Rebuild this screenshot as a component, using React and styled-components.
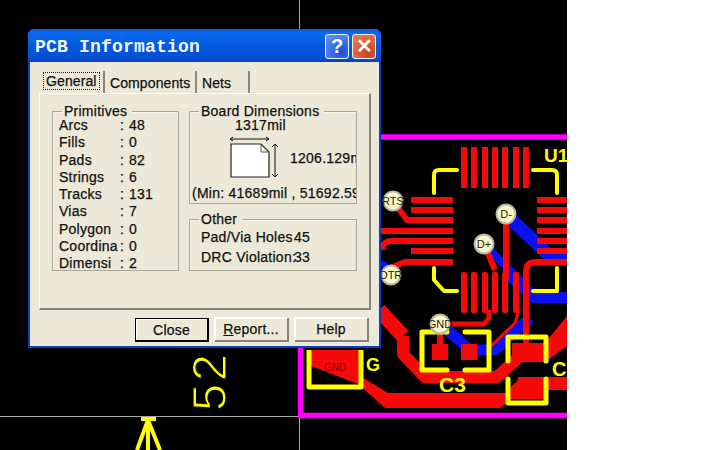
import React from "react";
import styled, { createGlobalStyle } from "styled-components";

const GlobalStyle = createGlobalStyle`
  html, body { margin: 0; padding: 0; background: #fff; }
  * { box-sizing: border-box; }
`;

const Desktop = styled.div`
  position: relative;
  width: 567px;
  height: 450px;
  background: #000;
  overflow: hidden;
`;

const Dialog = styled.div`
  position: absolute;
  left: 28px;
  top: 29px;
  width: 353px;
  height: 319px;
  display: flex;
  flex-direction: column;
  background: #ece9d8;
  border: 2px solid #0a3fc4;
  border-top: none;
  border-radius: 6px 6px 0 0;
  font-family: "Liberation Sans", Arial, sans-serif;
  font-size: 14px;
  color: #111;
`;

const TitleBar = styled.div`
  height: 33px;
  margin: 0 -2px;
  flex: none;
  display: flex;
  align-items: center;
  justify-content: space-between;
  padding: 3px 5px 0 7px;
  border-radius: 6px 6px 0 0;
  background: linear-gradient(180deg, #0a5be0 0%, #0a6af0 12%, #0458dc 55%, #0450d4 85%, #0a3fc0 100%);
`;

const Title = styled.div`
  font-family: "Liberation Mono", monospace;
  font-weight: 700;
  font-size: 18px;
  letter-spacing: 0.2px;
  color: #f2f6ff;
`;

const TitleButtons = styled.div`
  display: flex;
  gap: 3px;
  margin-top: -2px;
`;

const TitleButton = styled.div`
  width: 24px;
  height: 25px;
  display: flex;
  align-items: center;
  justify-content: center;
  border: 1px solid #f4f6ff;
  border-radius: 3px;
  font-family: "Liberation Sans", sans-serif;
  font-weight: 700;
  font-size: 20px;
  color: #fff;
  background: ${(p) =>
    p.$danger
      ? "radial-gradient(circle at 70% 75%, #c8401c, #e8764e 80%)"
      : "radial-gradient(circle at 70% 75%, #1a4fd8, #5f8cf0 85%)"};
`;

const Tabs = styled.div`
  display: flex;
  height: 22px;
  margin: 9px 0 0 10px;
  flex: none;
`;

const Tab = styled.div`
  width: ${(p) => p.$width}px;
  padding: ${(p) => (p.$active ? "1px 0 0 3px" : "4px 0 0 5px")};
  border-right: 2px solid #8a8878;
  letter-spacing: 0.1px;
  -webkit-text-stroke: 0.25px #111;
`;

const ActiveLabel = styled.span`
  display: inline-block;
  height: 18px;
  padding: 0 2px 0 2px;
  border: 1px dotted #222;
`;

const Panel = styled.div`
  height: 217px;
  margin: 0 8px 0 9px;
  padding: 17px 12px 0;
  flex: none;
  display: grid;
  grid-template-columns: 127px 168px;
  column-gap: 10px;
  align-content: start;
  border-top: 1px solid #fff;
  border-left: 1px solid #fff;
  border-right: 2px solid #85837a;
  border-bottom: 2px solid #85837a;
`;

const Column = styled.div`
  display: flex;
  flex-direction: column;
  gap: 15px;
`;

const Group = styled.div`
  height: ${(p) => p.$height}px;
  border: 1px solid #a9a797;
  box-shadow: inset 1px 1px 0 #f6f5ee;
  letter-spacing: 0.25px;
  -webkit-text-stroke: 0.25px #111;
`;

const Legend = styled.div`
  display: table;
  height: 16px;
  line-height: 16px;
  margin: -9px 0 0 ${(p) => p.$left || 9}px;
  padding: 0 5px 0 2px;
  background: #ece9d8;
`;

const Rows = styled.div`
  display: grid;
  grid-template-columns: 61px 9px auto;
  grid-auto-rows: 17.3px;
  margin-top: -2px;
  padding: 0 0 0 6px;
  line-height: 17px;
  white-space: nowrap;
`;

const Clip = styled.div`
  overflow: hidden;
`;

const Clipped = styled.div`
  height: 82px;
  overflow: hidden;
  white-space: nowrap;
`;

const Width = styled.div`
  height: 14px;
  line-height: 13px;
  padding-left: 45px;
`;

const Diagram = styled.div`
  height: 49px;
  display: flex;
  align-items: flex-start;
  gap: 9px;
  padding: 3px 0 0 39px;
`;

const HeightLabel = styled.div`
  margin-top: 14px;
`;

const MinLine = styled.div`
  margin-top: 3px;
  padding-left: 2px;
`;

const OtherRows = styled.div`
  padding: 0 0 0 11px;
  line-height: 20px;
  white-space: nowrap;
`;

const OtherRow = styled.div`
  display: grid;
  grid-template-columns: 93px auto;
`;

const Footer = styled.div`
  display: flex;
  justify-content: flex-end;
  gap: 6px;
  padding: 8px 10px 0 0;
`;

const Button = styled.div`
  width: 74px;
  height: 24px;
  display: flex;
  align-items: center;
  justify-content: center;
  letter-spacing: 0.2px;
  -webkit-text-stroke: 0.25px #111;
  background: #ece9d8;
  border: ${(p) => (p.$primary ? "1px solid #000" : "none")};
  border-right: ${(p) => (p.$primary ? "2px solid #000" : "2px solid #85837a")};
  border-bottom: ${(p) => (p.$primary ? "2px solid #000" : "2px solid #85837a")};
  box-shadow: ${(p) => (p.$primary ? "inset 1px 1px 0 #fff" : "inset 1px 1px 0 #fff, -1px -1px 0 #fff")};
`;

const Underline = styled.span`
  text-decoration: underline;
`;

const Red = "#f50a0a";
const Blue = "#0a10f0";
const Yellow = "#ffff00";

// pins along the top and bottom edges of U1
const vPins = [461, 471, 482, 492, 502, 513, 523];
const hPins = [197, 207, 217, 228, 238, 248, 259];

const vias = [
  { x: 393, y: 201, t: "RTS" },
  { x: 506, y: 214, t: "D-" },
  { x: 484, y: 244, t: "D+" },
  { x: 391, y: 275, t: "DTR" },
  { x: 440, y: 324, t: "GND" },
];

const Board = () => (
  <svg width="567" height="450" viewBox="0 0 567 450" style={{ display: "block" }}>
    <path d="M299.5 0V30M0 416.5H300M299.5 418V450" stroke="#a8a8a8" fill="none" />

    {/* arrow at the origin */}
    <path d="M141 419H156" stroke={Yellow} strokeWidth="4" />
    <path d="M148 420L137 450M148 420V450M148 420L160 450" stroke={Yellow} strokeWidth="4" fill="none" />

    <text
      transform="translate(226 411) rotate(-90)"
      fontFamily="Liberation Sans, sans-serif"
      fontSize="49"
      fill={Yellow}
      stroke="#000"
      strokeWidth="1.2"
      textLength="57"
    >
      52
    </text>

    {/* board outline */}
    <path d="M300.5 348V415.5H567M381 137H567" stroke="#ff00ff" strokeWidth="5.5" fill="none" />

    {/* blue layer */}
    <g stroke={Blue} fill="none">
      <path d="M512 220L552 258H567" strokeWidth="13" />
      <path d="M484 244L535 296H567" strokeWidth="8" />
      <path d="M505 272L535 298H567" strokeWidth="11" />
      <path d="M445 328L470 350H495L530 318" strokeWidth="11" />
      <path d="M381 262L392 272" strokeWidth="6" />
    </g>

    {/* red layer */}
    <g fill={Red} stroke="none">
      {vPins.map((x) => (
        <rect key={`t${x}`} x={x} y="147" width="6" height="41" />
      ))}
      {vPins.map((x) => (
        <rect key={`b${x}`} x={x} y="272" width="6" height="41" rx="2" />
      ))}
      {hPins.map((y) => (
        <rect key={`l${y}`} x="411" y={y} width="42" height="6" />
      ))}
      {hPins.map((y) => (
        <rect key={`r${y}`} x="537" y={y} width="30" height="6" />
      ))}
      <rect x="432" y="344" width="16" height="16" />
      <rect x="461" y="344" width="16" height="16" />
      {/* C2 pads and their copper */}
      <path d="M512 343H545L567 316V346L545 362H512Z" />
      <path d="M518 377H567V390H544V399H512L500 408H385L358 384L311 366V350H360V376L388 393H505L518 380Z" />
    </g>
    <g stroke={Red} fill="none" strokeLinejoin="round">
      <path d="M393 201L407 220H420" strokeWidth="6" />
      <path d="M381 231H420" strokeWidth="6" />
      <path d="M382 250V248Q384 241 392 241H420" strokeWidth="6" />
      <path d="M390 268L405 262H420" strokeWidth="6" />
      <path d="M506 218V280" strokeWidth="6" />
      <path d="M484 244L495 270" strokeWidth="6" />
      <path d="M526 280V272Q526 262 536 262H567" strokeWidth="6" />
      <path d="M526 310V345" strokeWidth="6" />
      <path d="M445 324H484L489 318V310" strokeWidth="5" />
      <path d="M519 310L515 323L490 347" strokeWidth="3" />
      <path d="M440 324L440 344" strokeWidth="6" />
      <path d="M379 310L403 336" strokeWidth="15" />
      <path d="M403 336V354L425 377H497L520 356" strokeWidth="12" />
    </g>

    {/* silkscreen */}
    <g stroke={Yellow} fill="none" strokeWidth="4" strokeLinejoin="round" strokeLinecap="round">
      <path d="M434 193V175Q434 170 439 170H457" />
      <path d="M533 170H552Q557 170 557 175V193" />
      <path d="M434 268V280L444 291H457" />
      <path d="M533 291H557V268" />
      <path d="M447 332H422V370H447M465 332H489V370H465" strokeWidth="5" />
      <path d="M508 361V337H546V361M508 379V403H546V379" strokeWidth="5" />
      <path d="M309 350V387H361V350" strokeWidth="5" strokeLinecap="butt" />
    </g>

    <g fontFamily="Liberation Sans, sans-serif" fill={Yellow} fontWeight="700">
      <text x="544" y="162" fontSize="19">U1</text>
      <text x="366" y="371" fontSize="18">G</text>
      <text x="439" y="392" fontSize="21">C3</text>
      <text x="552" y="376" fontSize="20">C2</text>
    </g>
    <text x="324" y="371" fontFamily="Liberation Sans, sans-serif" fontSize="10" fill="#a00000">GND</text>

    {vias.map((v) => (
      <g key={v.t}>
        <circle cx={v.x} cy={v.y} r="9.5" fill="#fdf8c4" stroke="#b8b8a8" strokeWidth="2" />
        <text
          x={v.x}
          y={v.y + 4}
          textAnchor="middle"
          fontFamily="Liberation Sans, sans-serif"
          fontSize="11"
          fill="#202010"
        >
          {v.t}
        </text>
      </g>
    ))}
  </svg>
);

const PageIcon = () => (
  <svg width="52" height="42" viewBox="0 0 52 42" style={{ display: "block", flex: "none" }}>
    <path d="M1 3H40M1 3L4 1M1 3L4 5M40 3L37 1M40 3L37 5" stroke="#111" fill="none" />
    <path d="M2 8H32L40 16V41H2Z" fill="#fff" stroke="#222" strokeWidth="1.2" />
    <path d="M32 8V16H40" fill="none" stroke="#555" />
    <path d="M46 8V41M46 8L43 11M46 8L49 11M46 41L43 38M46 41L49 38" stroke="#111" fill="none" />
  </svg>
);

const primitives = [
  ["Arcs", 48],
  ["Fills", 0],
  ["Pads", 82],
  ["Strings", 6],
  ["Tracks", 131],
  ["Vias", 7],
  ["Polygon", 0],
  ["Coordina", 0],
  ["Dimensi", 2],
];

const App = () => {
  return (
    <>
      <GlobalStyle />
      <Desktop>
        <Board />
        <Dialog>
          <TitleBar>
            <Title>PCB Information</Title>
            <TitleButtons>
              <TitleButton>?</TitleButton>
              <TitleButton $danger>✕</TitleButton>
            </TitleButtons>
          </TitleBar>

          <Tabs>
            <Tab $active $width={65}>
              <ActiveLabel>General</ActiveLabel>
            </Tab>
            <Tab $width={92}>Components</Tab>
            <Tab $width={53}>Nets</Tab>
          </Tabs>

          <Panel>
            <Group $height={160}>
              <Legend>Primitives</Legend>
              <Rows>
                {primitives.map(([label, value]) => (
                  <React.Fragment key={label}>
                    <Clip>{label}</Clip>
                    <span>:</span>
                    <span>{value}</span>
                  </React.Fragment>
                ))}
              </Rows>
            </Group>

            <Column>
              <Group $height={93}>
                <Legend>Board Dimensions</Legend>
                <Clipped>
                  <Width>1317mil</Width>
                  <Diagram>
                    <PageIcon />
                    <HeightLabel>1206.129mil</HeightLabel>
                  </Diagram>
                  <MinLine>(Min: 41689mil , 51692.598mil)</MinLine>
                </Clipped>
              </Group>
              <Group $height={52}>
                <Legend>Other</Legend>
                <OtherRows>
                  <OtherRow>
                    <span>Pad/Via Holes</span>
                    <span>45</span>
                  </OtherRow>
                  <OtherRow>
                    <span>DRC Violation:</span>
                    <span>33</span>
                  </OtherRow>
                </OtherRows>
              </Group>
            </Column>
          </Panel>

          <Footer>
            <Button $primary>Close</Button>
            <Button>
              <span>
                <Underline>R</Underline>eport...
              </span>
            </Button>
            <Button>Help</Button>
          </Footer>
        </Dialog>
      </Desktop>
    </>
  );
};

export default App;
